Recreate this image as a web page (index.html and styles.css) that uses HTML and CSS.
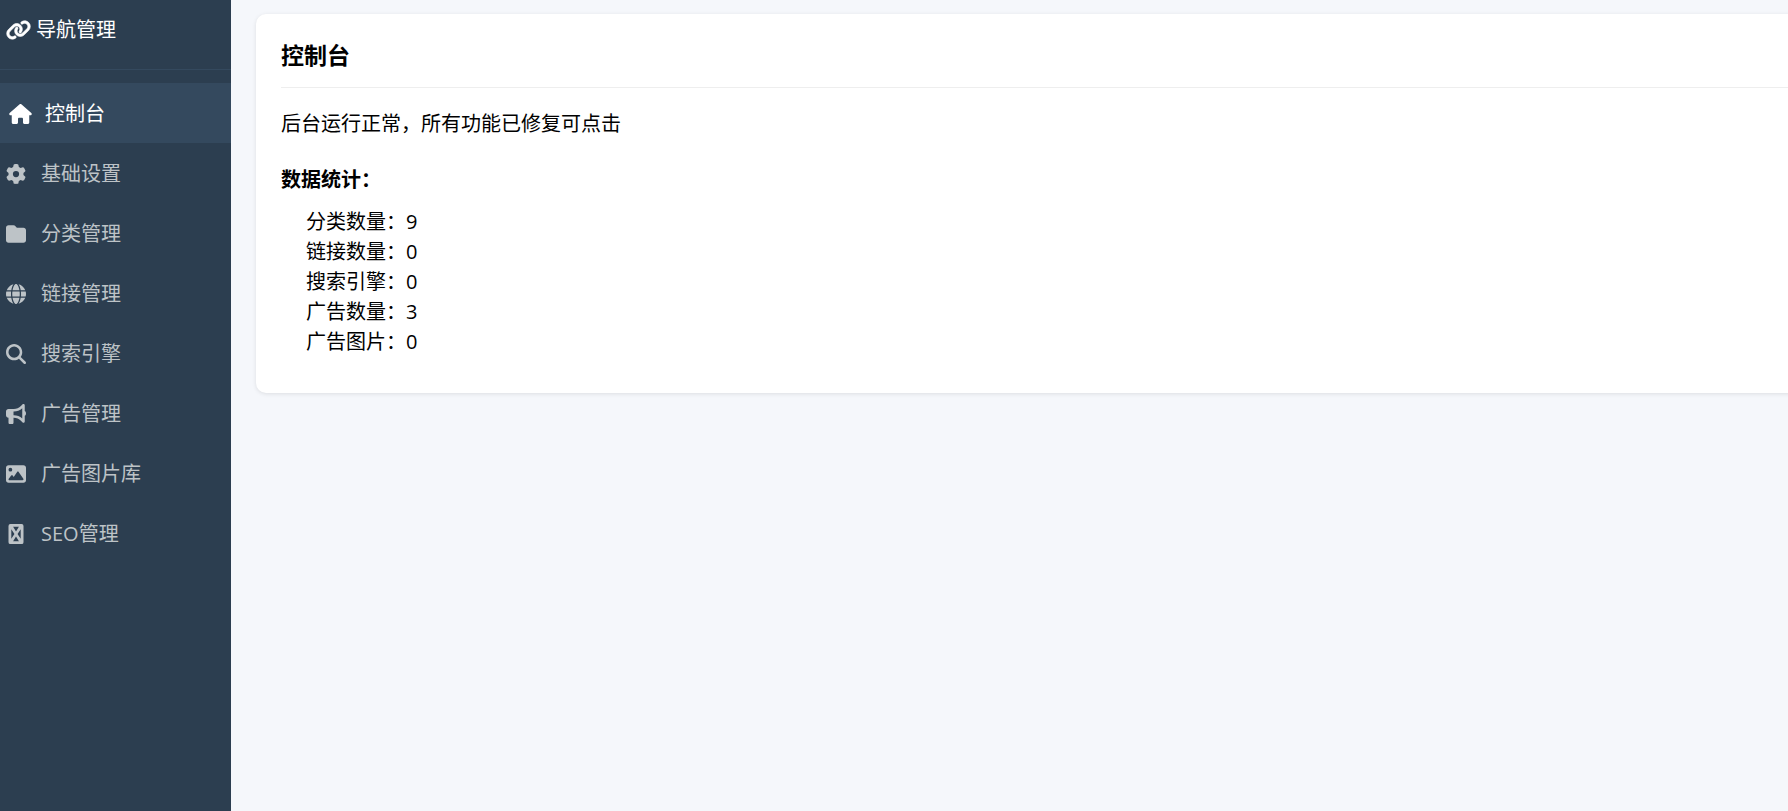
FILE: index.html
```html
<!DOCTYPE html>
<html lang="zh-CN">
<head>
<meta charset="utf-8">
<title>导航管理</title>
<link rel="stylesheet" href="styles.css">
</head>
<body>
<div class="layout">
  <aside class="sidebar">
    <div class="brand">
      <svg class="icon icon-wider" viewBox="0 0 640 512" aria-hidden="true"><path d="M579.8 267.7c56.5-56.5 56.5-148 0-204.5c-50-50-128.8-56.5-186.3-15.4l-1.6 1.1c-14.4 10.3-17.7 30.3-7.4 44.6s30.3 17.7 44.6 7.4l1.6-1.1c32.1-22.9 76-19.3 103.8 8.6c31.5 31.5 31.5 82.5 0 114L422.3 334.8c-31.5 31.5-82.5 31.5-114 0c-27.9-27.9-31.5-71.8-8.6-103.8l1.1-1.6c10.3-14.4 6.9-34.4-7.4-44.6s-34.4-6.9-44.6 7.4l-1.1 1.6C206.5 251.2 213 330 263 380c56.5 56.5 148 56.5 204.5 0L579.8 267.7zM60.2 244.3c-56.5 56.5-56.5 148 0 204.5c50 50 128.8 56.5 186.3 15.4l1.6-1.1c14.4-10.3 17.7-30.3 7.4-44.6s-30.3-17.7-44.6-7.4l-1.6 1.1c-32.1 22.9-76 19.3-103.8-8.6C74 372 74 321 105.5 289.5L217.7 177.2c31.5-31.5 82.5-31.5 114 0c27.9 27.9 31.5 71.8 8.6 103.9l-1.1 1.6c-10.3 14.4-6.9 34.4 7.4 44.6s34.4 6.9 44.6-7.4l1.1-1.6C433.5 260.8 427 182 377 132c-56.5-56.5-148-56.5-204.5 0L60.2 244.3z"/></svg>
      <span>导航管理</span>
    </div>
    <nav class="menu">
      <a class="item active" href="#dashboard"><svg class="icon icon-wide" viewBox="0 0 576 512" aria-hidden="true"><path d="M575.8 255.5c0 18-15 32.1-32 32.1h-32l.7 160.2c0 2.7-.2 5.4-.5 8.1V472c0 22.1-17.9 40-40 40H392c-22.1 0-40-17.9-40-40V384c0-17.7-14.3-32-32-32H256c-17.7 0-32 14.3-32 32v88c0 22.1-17.9 40-40 40H104c-22.1 0-40-17.9-40-40V287.600H32c-18 0-32-14-32-32.100c0-9 3-17 10-24L266.400 8c7-7 15-8 22-8s15 2 21 7L564.800 231.500c8 7 12 15 11 24z"/></svg><span>控制台</span></a>
      <a class="item" href="#settings"><svg class="icon" viewBox="0 0 512 512" aria-hidden="true"><path d="M495.900 166.600c3.200 8.700 .5 18.400-6.400 24.600l-43.300 39.400c1.100 8.300 1.700 16.800 1.700 25.400s-.6 17.100-1.700 25.400l43.300 39.400c6.900 6.200 9.600 15.900 6.400 24.600c-4.400 11.900-9.700 23.300-15.800 34.300l-4.700 8.100c-6.600 11-14 21.400-22.100 31.200c-5.900 7.200-15.700 9.600-24.500 6.800l-55.700-17.700c-13.400 10.300-28.200 18.900-44 25.400l-12.500 57.100c-2 9.100-9 16.300-18.200 17.800c-13.800 2.300-28 3.500-42.500 3.500s-28.700-1.200-42.500-3.500c-9.200-1.500-16.200-8.700-18.200-17.800l-12.500-57.100c-15.800-6.500-30.600-15.100-44-25.400L83.100 425.900c-8.800 2.800-18.600 .3-24.500-6.800c-8.100-9.800-15.500-20.200-22.100-31.200l-4.700-8.100c-6.100-11-11.400-22.400-15.800-34.300c-3.200-8.700-.5-18.400 6.400-24.600l43.300-39.400C64.600 273.100 64 264.600 64 256s.6-17.100 1.700-25.400L22.400 191.200c-6.900-6.200-9.600-15.900-6.400-24.600c4.400-11.900 9.700-23.300 15.800-34.300l4.700-8.100c6.600-11 14-21.400 22.100-31.200c5.900-7.200 15.700-9.600 24.500-6.800l55.700 17.700c13.400-10.300 28.200-18.900 44-25.400l12.500-57.100c2-9.100 9-16.300 18.200-17.800C227.300 1.200 241.500 0 256 0s28.700 1.200 42.500 3.500c9.200 1.500 16.200 8.700 18.200 17.800l12.500 57.100c15.800 6.500 30.600 15.100 44 25.400l55.700-17.700c8.800-2.800 18.600-.3 24.500 6.800c8.100 9.800 15.500 20.200 22.100 31.200l4.700 8.100c6.100 11 11.400 22.400 15.800 34.300zM256 336a80 80 0 1 0 0-160 80 80 0 1 0 0 160z"/></svg><span>基础设置</span></a>
      <a class="item" href="#categories"><svg class="icon" viewBox="0 0 512 512" aria-hidden="true"><path d="M64 480H448c35.300 0 64-28.700 64-64V160c0-35.300-28.700-64-64-64H288c-10.100 0-19.600-4.700-25.600-12.800L243.200 57.600C231.100 41.500 212.100 32 192 32H64C28.700 32 0 60.700 0 96V416c0 35.300 28.700 64 64 64z"/></svg><span>分类管理</span></a>
      <a class="item" href="#links"><svg class="icon" viewBox="0 0 512 512" aria-hidden="true"><path d="M352 256c0 22.200-1.200 43.600-3.300 64H163.300c-2.200-20.400-3.300-41.800-3.300-64s1.200-43.600 3.300-64H348.700c2.200 20.400 3.300 41.800 3.300 64zm28.800-64H503.900c5.300 20.500 8.100 41.900 8.100 64s-2.800 43.500-8.100 64H380.800c2.100-20.600 3.200-42 3.200-64s-1.100-43.400-3.200-64zm112.600-32H376.700c-10-63.900-29.800-117.400-55.300-151.600c78.300 20.700 142 77.500 171.900 151.600zm-149.100 0H167.700c6.100-36.400 15.500-68.600 27-94.700c10.500-23.600 22.200-40.700 33.500-51.500C239.400 3.200 248.700 0 256 0s16.600 3.200 27.800 13.800c11.300 10.800 23 27.900 33.500 51.500c11.600 26 20.900 58.200 27 94.700zm-209 0H18.600C48.600 85.900 112.200 29.100 190.600 8.400C165.100 42.600 145.300 96.100 135.300 160zM8.100 192H131.200c-2.100 20.600-3.200 42-3.200 64s1.100 43.400 3.200 64H8.100C2.800 299.500 0 278.100 0 256s2.800-43.500 8.100-64zM194.700 446.600c-11.600-26-20.900-58.200-27-94.600H344.300c-6.100 36.400-15.500 68.600-27 94.600c-10.500 23.600-22.200 40.700-33.500 51.500C272.600 508.800 263.300 512 256 512s-16.600-3.200-27.800-13.800c-11.300-10.800-23-27.900-33.500-51.500zM135.300 352c10 63.900 29.800 117.400 55.300 151.600C112.200 482.900 48.600 426.100 18.600 352H135.300zm358.100 0c-30 74.100-93.600 130.900-171.900 151.600c25.500-34.200 45.200-87.700 55.300-151.600H493.400z"/></svg><span>链接管理</span></a>
      <a class="item" href="#search"><svg class="icon" viewBox="0 0 512 512" aria-hidden="true"><path d="M416 208c0 45.900-14.900 88.300-40 122.700L502.600 457.400c12.500 12.500 12.500 32.800 0 45.300s-32.800 12.500-45.300 0L330.700 376c-34.400 25.200-76.800 40-122.700 40C93.100 416 0 322.900 0 208S93.100 0 208 0S416 93.100 416 208zM208 352a144 144 0 1 0 0-288 144 144 0 1 0 0 288z"/></svg><span>搜索引擎</span></a>
      <a class="item" href="#ads"><svg class="icon" viewBox="0 0 512 512" aria-hidden="true"><path d="M480 32c0-12.900-7.800-24.600-19.800-29.600s-25.700-2.200-34.900 6.900L381.700 53c-48 48-113.100 75-181 75H64c-35.300 0-64 28.700-64 64v96c0 35.300 28.700 64 64 64v128c0 17.700 14.300 32 32 32h64c17.700 0 32-14.300 32-32V352h8.700c67.900 0 133 27 181 75l43.600 43.600c9.200 9.200 22.900 11.900 34.900 6.900s19.800-16.600 19.800-29.600V300.400c18.600-8.800 32-32.500 32-60.400s-13.400-51.600-32-60.400V32zm-64 76.700v262.600C357.200 317.800 280.500 288 200.700 288H192V192h8.700c79.800 0 156.500-29.800 215.300-83.300z"/></svg><span>广告管理</span></a>
      <a class="item" href="#gallery"><svg class="icon" viewBox="0 0 512 512" aria-hidden="true"><path d="M0 96C0 60.700 28.700 32 64 32H448c35.300 0 64 28.700 64 64V416c0 35.300-28.700 64-64 64H64c-35.300 0-64-28.700-64-64V96zM323.800 202.500c-4.500-6.600-11.900-10.500-19.800-10.500s-15.400 3.900-19.800 10.500l-87 127.600L170.700 297c-4.600-5.700-11.500-9-18.700-9s-14.200 3.300-18.700 9l-64 80c-5.800 7.200-6.900 17.100-2.900 25.400s12.400 13.600 21.600 13.600h336c8.900 0 17.100-4.900 21.200-12.800s3.600-17.400-1.400-24.700l-120-176zM112 192a48 48 0 1 0 0-96 48 48 0 1 0 0 96z"/></svg><span>广告图片库</span></a>
      <a class="item" href="#seo"><svg class="icon" viewBox="0 0 512 512" aria-hidden="true"><path fill-rule="evenodd" d="M112 0H400a48 48 0 0 1 48 48V464a48 48 0 0 1-48 48H112a48 48 0 0 1-48-48V48A48 48 0 0 1 112 0zM182 72L256 190L330 72zM136 132V380L216 256zM376 132L296 256L376 380zM256 322L182 440H330z"/></svg><span>SEO管理</span></a>
    </nav>
  </aside>
  <main class="content">
    <section class="card">
      <h1 class="title">控制台</h1>
      <p class="status">后台运行正常，所有功能已修复可点击</p>
      <h2 class="subtitle">数据统计：</h2>
      <ul class="stats">
        <li>分类数量：9</li>
        <li>链接数量：0</li>
        <li>搜索引擎：0</li>
        <li>广告数量：3</li>
        <li>广告图片：0</li>
      </ul>
    </section>
  </main>
</div>
</body>
</html>
```
FILE: styles.css
```css
* {
  box-sizing: border-box;
  margin: 0;
  padding: 0;
}

body {
  background: #f5f7fb;
  color: #000;
  font-family: "Open Sans", "Noto Sans CJK SC", sans-serif;
  font-size: 20px;
  line-height: 30px;
}

.layout {
  display: flex;
  min-height: 100vh;
  overflow: hidden;
}

.sidebar {
  flex: 0 0 231px;
  background: #2c3e50;
  color: #fff;
}

.brand {
  display: flex;
  align-items: center;
  gap: 5px;
  height: 70px;
  padding: 0 6px 10px;
  border-bottom: 1px solid #34495e;
}

.brand .icon {
  stroke: currentColor;
  stroke-width: 16px;
  overflow: visible;
}

.menu {
  padding-top: 13px;
}

.item {
  display: flex;
  align-items: center;
  gap: 15px;
  height: 60px;
  padding: 2px 6px 0;
  color: #bdc3c7;
  text-decoration: none;
}

.item.active {
  gap: 13px;
  padding: 2px 9px 0;
  background: #34495e;
  color: #fff;
}

.icon {
  flex: none;
  width: 20px;
  height: 20px;
  fill: currentColor;
}

.icon-wide {
  width: 23px;
}

.icon-wider {
  width: 25px;
}

.content {
  flex: 1;
  min-width: 0;
  padding: 14px 0 14px 25px;
}

.card {
  margin-right: -25px;
  padding: 24px 25px;
  border-radius: 10px;
  background: #fff;
  box-shadow: 0 1px 4px rgba(0, 0, 0, 0.1);
}

.title {
  padding-bottom: 15px;
  border-bottom: 1px solid #eee;
  font-size: 23px;
  line-height: 34px;
}

.status {
  padding-top: 21px;
}

.subtitle {
  padding-top: 26px;
  font-size: 20px;
}

.stats {
  padding: 12px 25px;
  list-style: none;
}
```
